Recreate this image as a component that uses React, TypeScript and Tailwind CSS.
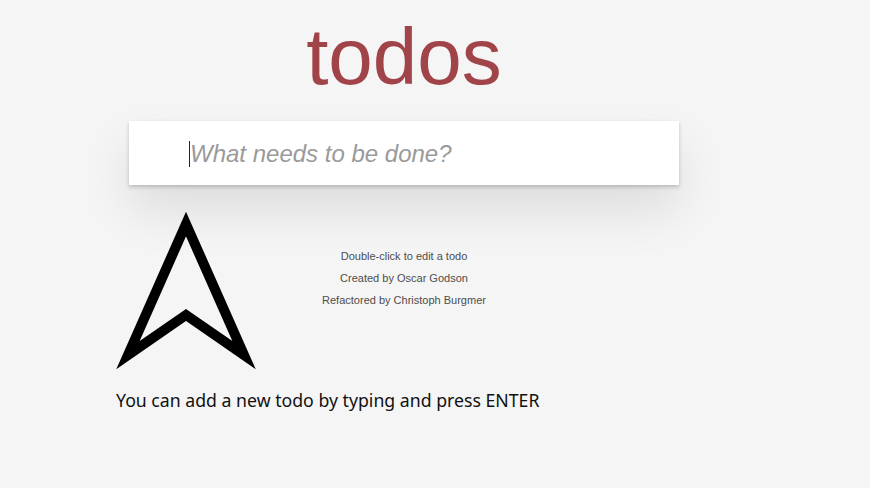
export default function App() {
  return (
    <div className="relative min-h-[488px] w-full bg-[#f5f5f5] font-['Liberation_Sans',Arial,sans-serif] overflow-hidden">
      <div className="ml-[129px] w-[550px] pt-[17px]">
        <h1 className="text-center text-[80px] leading-none text-[#a0444a]">todos</h1>

        <div className="mt-[24px] h-[64px] bg-white shadow-[0_2px_4px_0_rgba(0,0,0,0.2),0_25px_50px_0_rgba(0,0,0,0.1)] flex items-center pl-[60px] pt-[2px]">
          <span className="h-[26px] w-px bg-[#222]" />
          <span className="text-[24px] italic text-[#9a9a9a]">What needs to be done?</span>
        </div>

        <div className="mt-[66px] text-center text-[11px] leading-none text-[#4d4d4d]">
          <p>Double-click to edit a todo</p>
          <p className="mt-[11px]">Created by Oscar Godson</p>
          <p className="mt-[11px]">Refactored by Christoph Burgmer</p>
        </div>
      </div>

      {/* hint overlay */}
      <svg className="absolute left-[110px] top-[205px]" width="154" height="170" viewBox="110 205 154 170">
        <polygon points="186,224 128,355 186,315 244,355" fill="none" stroke="#000" strokeWidth="10" strokeLinejoin="miter" strokeMiterlimit="10" />
      </svg>
      <p className="absolute left-[116px] top-[387px] text-[17.7px] text-[#111] font-['Noto_Sans',sans-serif] whitespace-nowrap">
        You can add a new todo by typing and press ENTER
      </p>
    </div>
  );
}
